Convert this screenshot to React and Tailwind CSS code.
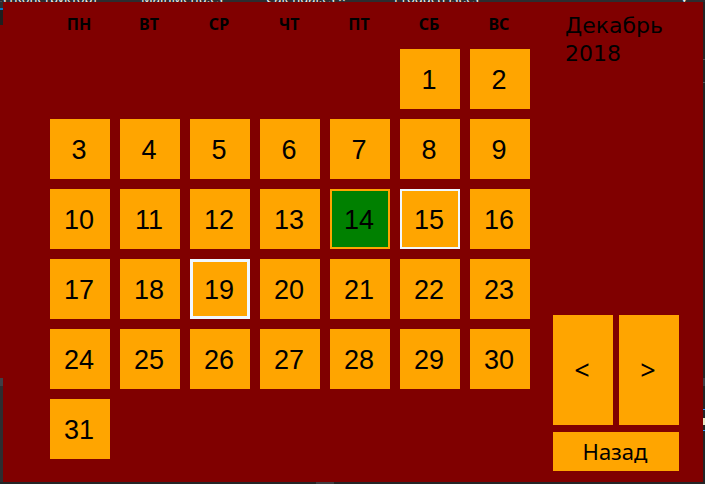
const weekdays = ["ПН", "ВТ", "СР", "ЧТ", "ПТ", "СБ", "ВС"];

const firstWeekday = 5;
const daysInMonth = 31;

const weeks = Array.from({ length: 6 }, (_, week) =>
  Array.from({ length: 7 }, (_, column) => {
    const day = week * 7 + column - firstWeekday + 1;
    return day >= 1 && day <= daysInMonth ? day : null;
  })
);

const dayStyles = {
  14: "bg-[#008000] border-2 border-[#ffa500]",
  15: "bg-[#ffa500] border-2 border-[#f0f8ff]",
  19: "bg-[#ffa500] border-3 border-[#f0f8ff]",
};

function EditorTabs() {
  return (
    <div className="flex h-[2px] items-end overflow-hidden bg-[#2d2d30] font-['Noto_Sans',sans-serif] text-[13px] leading-[8px] text-[#f1f1f1]">
      <span className="w-[141px] shrink-0 whitespace-nowrap">s [Конструктор]</span>
      <span className="w-[125px] shrink-0 whitespace-nowrap">MainMenu.cs</span>
      <span className="w-32 shrink-0 whitespace-nowrap">Calendar.cs ×</span>
      <span className="flex-1 whitespace-nowrap">ProductList.cs</span>
      <span className="w-6 shrink-0">▾</span>
    </div>
  );
}

function EditorRightEdge() {
  return (
    <div className="flex w-[2px] flex-col bg-[#252526]">
      <div className="mt-[57px] h-px bg-[#55555a]" />
      <div className="mt-[22px] h-px bg-[#55555a]" />
      <div className="mt-auto h-2 bg-[#3f3f46]" />
      <div className="mt-[23px] h-px bg-[#3399ff]" />
      <div className="mt-2 h-[7px] bg-[#e8e6c0]" />
      <div className="mt-[5px] mb-[51px] h-px bg-[#3399ff]" />
    </div>
  );
}

function Calendar() {
  return (
    <table className="shrink-0 border-separate border-spacing-[10px] self-start">
      <thead>
        <tr>
          {weekdays.map((name) => (
            <th
              key={name}
              scope="col"
              className="h-[27px] w-[60px] p-0 pr-[2px] pb-[3px] font-['Noto_Sans',sans-serif] text-base leading-6 font-bold"
            >
              {name}
            </th>
          ))}
        </tr>
      </thead>
      <tbody>
        {weeks.map((week, i) => (
          <tr key={i}>
            {week.map((day, j) => (
              <td key={j} className="size-[60px] p-0">
                {day && (
                  <button
                    type="button"
                    className={`flex size-[60px] items-center justify-center pt-[2px] pr-[2px] font-['Liberation_Sans',sans-serif] text-[27px] leading-8 ${dayStyles[day] ?? "bg-[#ffa500]"}`}
                  >
                    {day}
                  </button>
                )}
              </td>
            ))}
          </tr>
        ))}
      </tbody>
    </table>
  );
}

function Sidebar() {
  return (
    <aside className="flex flex-1 flex-col pt-[10px] pr-6 pb-[11px] pl-[13px]">
      <h1 className="pl-3 text-[22px] leading-7">
        Декабрь
        <br />
        2018
      </h1>
      <div className="mt-auto flex flex-col gap-[7px] font-['Noto_Sans',sans-serif] text-[22px]">
        <div className="flex gap-[6px] text-[27px]">
          <button type="button" aria-label="Предыдущий месяц" className="h-[110px] flex-1 bg-[#ffa500] pr-[2px]">
            &lt;
          </button>
          <button type="button" aria-label="Следующий месяц" className="h-[110px] flex-1 bg-[#ffa500] pr-[2px]">
            &gt;
          </button>
        </div>
        <button type="button" className="h-[39px] bg-[#ffa500] pr-[2px] pb-[2px] leading-7">
          Назад
        </button>
      </div>
    </aside>
  );
}

export default function App() {
  return (
    <div className="flex min-h-screen flex-col bg-[#252526]">
      <EditorTabs />
      <div className="flex flex-1">
        <div className="flex w-[3px] flex-col">
          <div className="h-[6px] bg-[#2d2d30]" />
          <div className="h-[2px] bg-[#007acc]" />
          <div className="h-[15px] bg-[#1e1e1e]" />
          <div className="flex-1 bg-[#800000]" />
          <div className="h-2 bg-[#3f3f46]" />
          <div className="h-24 bg-[#2d2d30]" />
        </div>
        <main className="flex flex-1 bg-[#800000] pl-[37px] font-['DejaVu_Sans',sans-serif] text-black">
          <Calendar />
          <Sidebar />
        </main>
        <EditorRightEdge />
      </div>
      <div className="flex h-[2px] bg-[#252526]">
        <div className="ml-[316px] w-[18px] bg-[#3e3e42]" />
      </div>
    </div>
  );
}
